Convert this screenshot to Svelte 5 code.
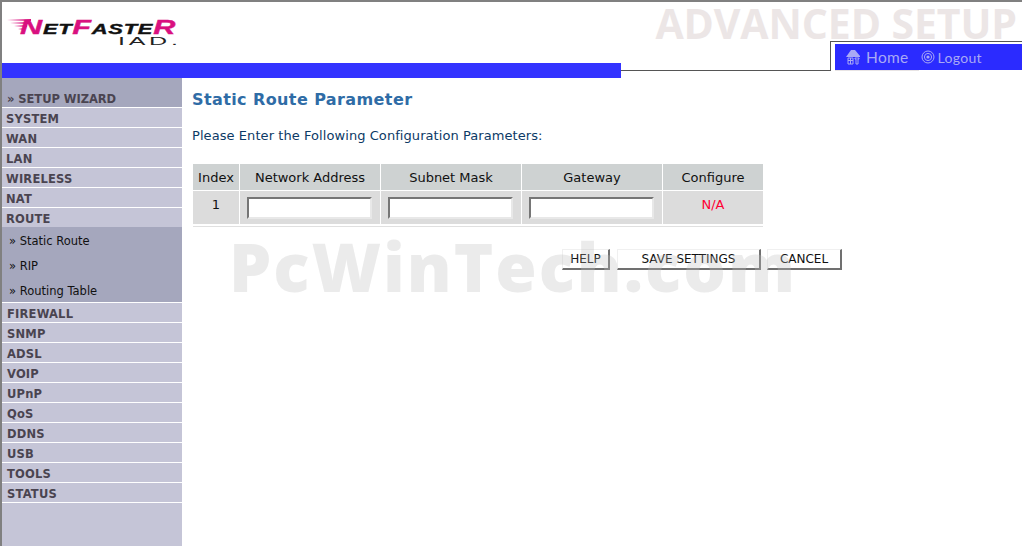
<script>
  const before = ["SYSTEM", "WAN", "LAN", "WIRELESS", "NAT", "ROUTE"];
  const subItems = ["Static Route", "RIP", "Routing Table"];
  const after = ["FIREWALL", "SNMP", "ADSL", "VOIP", "UPnP", "QoS", "DDNS", "USB", "TOOLS", "STATUS"];
  const columns = ["Index", "Network Address", "Subnet Mask", "Gateway", "Configure"];
</script>

<div class="page">
  <header class="top">
    <div class="logo">
      <svg class="streaks" viewBox="0 0 30 12" width="30" height="12" aria-hidden="true">
        <path d="M0 1 L24 0 L24 2 Z M3 4 L22 3 L22 5 Z M7 7 L20 6 L20 8 Z M11 10 L18 9 L18 11 Z" fill="#d9107f" />
      </svg>
      <div class="wordmark"><b>N</b>ET<b>F</b>ASTE<b>R</b></div>
      <div class="iad">IAD.</div>
    </div>
    <div class="title">ADVANCED SETUP</div>
    <div class="rule-row">
      <div class="strip"></div>
      <div class="rule"></div>
      <div class="tabs">
        <nav class="tab-bar">
          <a class="tab-link home" href="#home">
            <svg viewBox="0 0 16 16" width="16" height="16" aria-hidden="true">
              <path d="M1 8 L6 1 H10 L15 7 V8 H1 Z" fill="#a9a9f5" />
              <path d="M3 9 H8 V15 H3 Z M3 11.5 H8 M5.5 9 V15 M10 9 H14 V10 H13 V15 H11 V10 H10 Z" fill="none" stroke="#a9a9f5" stroke-width="1" />
            </svg>
            Home
          </a>
          <a class="tab-link" href="#logout">
            <svg viewBox="0 0 14 14" width="14" height="14" aria-hidden="true">
              <circle cx="7" cy="7" r="6" fill="none" stroke="#a9a9f5" />
              <circle cx="7" cy="7" r="3.6" fill="none" stroke="#a9a9f5" />
              <circle cx="7" cy="7" r="1.6" fill="#a9a9f5" />
            </svg>
            Logout
          </a>
        </nav>
      </div>
    </div>
  </header>

  <div class="body">
    <aside class="side">
      <div class="wizard">» SETUP WIZARD</div>
      {#each before as item}
        <div class="item">{item}</div>
      {/each}
      <div class="sub">
        {#each subItems as item}
          <div class="sub-item"><span class="mark">»</span> {item}</div>
        {/each}
      </div>
      {#each after as item}
        <div class="item shifted">{item}</div>
      {/each}
    </aside>

    <main class="content">
      <h1>Static Route Parameter</h1>
      <p class="intro">Please Enter the Following Configuration Parameters:</p>

      <table>
        <thead>
          <tr>
            {#each columns as col}
              <th>{col}</th>
            {/each}
          </tr>
        </thead>
        <tbody>
          <tr>
            <td class="idx">1</td>
            <td><input type="text" /></td>
            <td><input type="text" /></td>
            <td><input type="text" /></td>
            <td class="na">N/A</td>
          </tr>
        </tbody>
      </table>
      <div class="table-end"></div>

      <div class="actions">
        <button class="help">HELP</button>
        <button class="save">SAVE SETTINGS</button>
        <button class="cancel">CANCEL</button>
      </div>
    </main>
  </div>

  <div class="watermark">PcWinTech.com</div>
</div>

<style>
  :global(body) {
    margin: 0;
    background: #fff;
  }

  .page {
    position: relative;
    width: 1022px;
    height: 546px;
    overflow: hidden;
    box-sizing: border-box;
    border-top: 2px solid #808080;
    border-left: 2px solid #808080;
    font-family: "DejaVu Sans", Verdana, sans-serif;
    font-size: 13px;
  }

  .top {
    position: relative;
    height: 76px;
  }

  .logo {
    position: absolute;
    left: 5px;
    top: 14px;
    width: 172px;
    height: 34px;
  }

  .streaks {
    position: absolute;
    left: 0;
    top: 3px;
  }

  .wordmark {
    position: absolute;
    left: 13px;
    top: 0;
    font-family: "Liberation Sans", Arial, sans-serif;
    font-size: 15px;
    line-height: 22px;
    font-weight: bold;
    font-style: italic;
    letter-spacing: 0.5px;
    color: #111;
    white-space: nowrap;
    transform: scaleX(1.46);
    transform-origin: left;
    -webkit-text-stroke: 0.4px currentColor;
  }

  .wordmark b {
    font-size: 21px;
    color: #d9107f;
  }

  .iad {
    position: absolute;
    left: 111px;
    top: 20px;
    font-family: "Liberation Sans", Arial, sans-serif;
    font-size: 10px;
    line-height: 12px;
    letter-spacing: 1.5px;
    transform: scaleX(2.5);
    transform-origin: left;
    color: #222;
  }

  .title {
    position: absolute;
    right: 5px;
    top: -1px;
    font-family: "Open Sans", sans-serif;
    font-weight: 700;
    font-size: 41px;
    line-height: 44px;
    letter-spacing: -0.1px;
    color: #ece6e6;
    white-space: nowrap;
  }

  .rule-row {
    position: absolute;
    left: 0;
    right: 0;
    bottom: 0;
    height: 37px;
    display: flex;
    align-items: flex-end;
  }

  .strip {
    width: 619px;
    height: 15px;
    background: #3333ff;
  }

  .rule {
    width: 209px;
    height: 1px;
    margin-bottom: 7px;
    background: #555;
  }

  .tabs {
    flex: 1;
    align-self: flex-start;
    height: 30px;
    box-sizing: border-box;
    border-top: 1px solid #555;
    border-left: 1px solid #555;
    padding: 2px 0 2px 4px;
  }

  .tab-bar {
    position: relative;
    height: 26px;
    display: flex;
    align-items: center;
    gap: 12px;
    background: #2b2bff;
  }

  .tab-bar::after {
    content: "";
    position: absolute;
    left: 0;
    top: 26px;
    width: 84px;
    height: 1px;
    background: #e8e4e4;
  }

  .tab-link {
    display: flex;
    align-items: center;
    gap: 3px;
    color: #a9a9f5;
    text-decoration: none;
    font-family: Lato, sans-serif;
    font-size: 14px;
    letter-spacing: 0.3px;
    white-space: nowrap;
  }

  .tab-link.home {
    margin-left: 10px;
    gap: 5px;
    font-size: 15.5px;
  }

  .body {
    display: flex;
    height: 468px;
  }

  .side {
    width: 180px;
    flex: none;
    background: #c5c5d7;
    color: #4a4450;
    font-weight: bold;
    font-size: 11.5px;
    letter-spacing: 0.2px;
  }

  .wizard {
    height: 15px;
    padding: 14px 0 0 5px;
    line-height: 15px;
    background: #a5a7bd;
    border-bottom: 1px solid #fff;
    letter-spacing: -0.05px;
  }

  .item {
    height: 19px;
    line-height: 22px;
    padding-left: 4px;
    border-bottom: 1px solid #fff;
  }

  .item.shifted {
    padding-left: 5px;
  }

  .sub {
    background: #a5a7bd;
    height: 75px;
    border-bottom: 1px solid #fff;
    margin-top: -1px;
    font-weight: normal;
    font-size: 11.5px;
    letter-spacing: 0;
    color: #111;
  }

  .sub-item {
    height: 25px;
    line-height: 29px;
    padding-left: 7px;
  }

  .content {
    flex: 1;
    padding: 0 0 0 11px;
  }

  h1 {
    margin: 11px 0 0 -1px;
    font-size: 16px;
    line-height: 22px;
    font-weight: bold;
    letter-spacing: 0.4px;
    color: #2f6ca6;
  }

  .intro {
    margin: 16px 0 0 -1px;
    line-height: 17px;
    color: #0c3a66;
    letter-spacing: 0.07px;
  }

  table {
    margin-top: 20px;
    border-collapse: separate;
    border-spacing: 0;
    table-layout: fixed;
    width: 570px;
    font-size: 13px;
    color: #111;
  }

  th {
    height: 26px;
    padding: 0;
    font-weight: normal;
    background: #ced2d2;
    border-right: 1px solid #fff;
    border-bottom: 1px solid #fff;
    text-align: center;
  }

  td {
    height: 33px;
    padding: 0;
    background: #dcdcdc;
    border-right: 1px solid #fff;
    text-align: center;
  }

  th:first-child,
  td:first-child {
    width: 46px;
  }

  th:nth-child(2),
  th:nth-child(3),
  th:nth-child(4) {
    width: 140px;
  }

  th:last-child,
  td:last-child {
    border-right: 0;
  }

  .idx {
    vertical-align: top;
    padding-top: 6px;
    height: 27px;
  }

  .na {
    color: #ff0033;
    vertical-align: top;
    padding-top: 6px;
    height: 27px;
  }

  input {
    display: block;
    width: 125px;
    height: 22px;
    margin: 1px 0 0 7px;
    box-sizing: border-box;
    padding: 0;
    background: #fff;
    border-style: solid;
    border-width: 2px;
    border-color: #767676 #e8e8e8 #e8e8e8 #767676;
  }

  .table-end {
    width: 570px;
    height: 1px;
    margin-top: 2px;
    background: #e0e0e0;
  }

  .actions {
    display: flex;
    margin-top: 22px;
    padding-left: 369px;
    gap: 6px;
  }

  button {
    height: 21px;
    padding: 0 0 1px;
    box-sizing: border-box;
    background: #fff;
    border-style: solid;
    border-color: #f0f0f0 #707070 #707070 #f0f0f0;
    border-width: 1px 2px 2px 1px;
    font-family: "DejaVu Sans", Verdana, sans-serif;
    font-size: 12px;
    color: #111;
  }

  .help {
    width: 48px;
  }

  .save {
    width: 144px;
    margin-left: 1px;
  }

  .cancel {
    width: 75px;
  }

  .watermark {
    position: absolute;
    left: 227px;
    top: 229px;
    font-family: "Open Sans", sans-serif;
    font-weight: 800;
    font-size: 67px;
    line-height: 70px;
    letter-spacing: 2px;
    color: rgba(190, 190, 190, 0.3);
    white-space: nowrap;
    pointer-events: none;
  }
</style>
